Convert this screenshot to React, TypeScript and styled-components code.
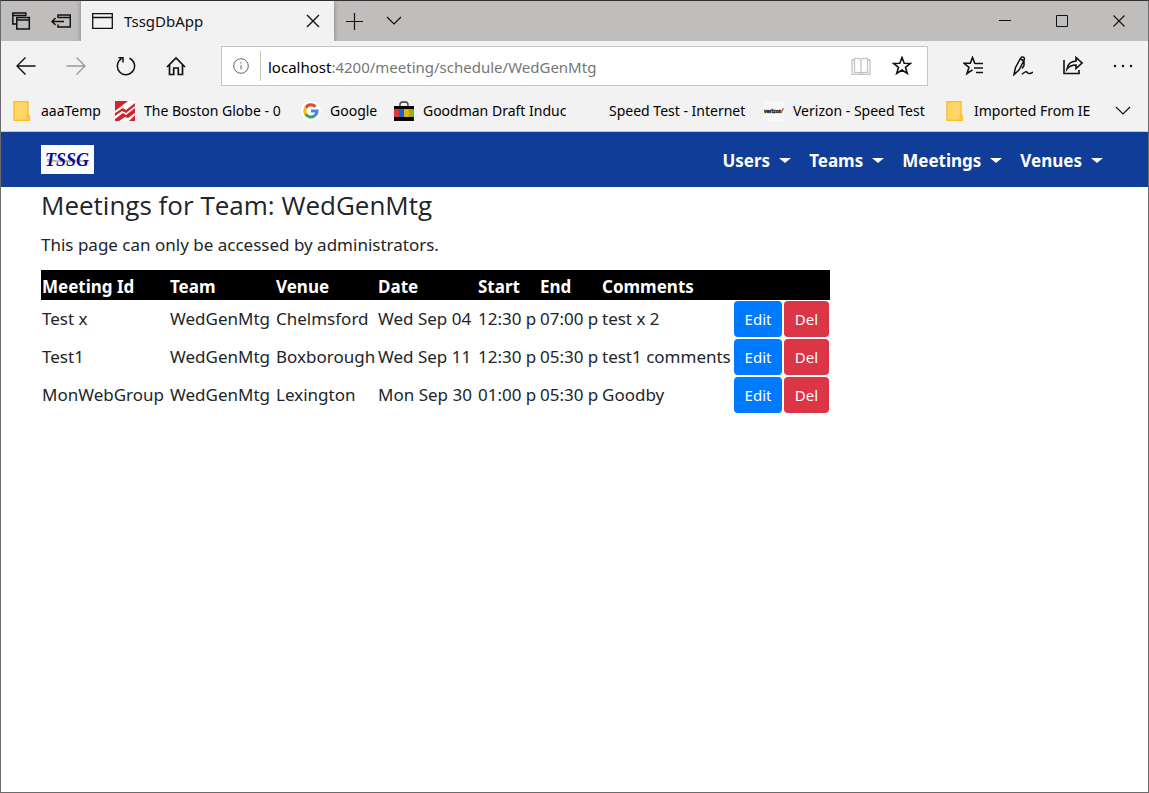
import React from "react";
import styled, { createGlobalStyle } from "styled-components";

const Global = createGlobalStyle`
  *, *::before, *::after { box-sizing: border-box; }
  body { margin: 0; background: #fff; font-family: "Noto Sans", "Open Sans", sans-serif; }
  button, input { font: inherit; color: inherit; }
`;

const Window = styled.div`
  min-height: 100vh;
  display: flex;
  flex-direction: column;
  border: 1px solid #6b6b6b;
  border-top-color: #333031;
`;

const TabStrip = styled.header`
  display: flex;
  height: 40px;
  padding-right: 1px;
  background: #bfbebc;
`;

const IconButton = styled.button<{ $w: number; $muted?: boolean }>`
  display: flex;
  align-items: center;
  justify-content: center;
  flex: none;
  width: ${(p) => p.$w}px;
  height: 40px;
  padding: 0;
  border: 0;
  background: transparent;
  color: ${(p) => (p.$muted ? "#9a9a9a" : "#111")};
`;

const Tab = styled.div`
  display: flex;
  align-items: center;
  width: 253px;
  padding-left: 11px;
  background: #f2f2f2;
  color: #111;
  box-shadow: 0 0 5px rgba(0, 0, 0, 0.35);
  clip-path: inset(0 -5px 0 -5px);
`;

const TabTitle = styled.span`
  flex: 1;
  padding-left: 11px;
  font-size: 15px;
  line-height: 20px;
`;

const Spacer = styled.div`
  flex: 1;
`;

const Toolbar = styled.div`
  display: flex;
  align-items: center;
  height: 50px;
  background: #f2f2f2;
`;

const AddressBar = styled.div`
  display: flex;
  align-items: center;
  flex: 1;
  min-width: 0;
  height: 40px;
  margin: 0 20px;
  padding-right: 5px;
  border: 1px solid #c6c6c6;
  background: #fff;
`;

const Address = styled.div`
  flex: 1;
  min-width: 0;
  padding-left: 7px;
  border-left: 1px solid #c6c6c6;
  height: 30px;
  font-size: 15px;
  line-height: 32px;
  color: #767676;
  white-space: nowrap;
  overflow: hidden;
`;

const Host = styled.span`
  color: #000;
`;

const Favorites = styled.nav`
  display: flex;
  align-items: center;
  height: 41px;
  padding: 0 7px 0 11px;
  border-bottom: 1px solid #cacaca;
  background: #f2f2f2;
`;

const Favorite = styled.a<{ $w: number }>`
  display: flex;
  align-items: center;
  flex: none;
  gap: 9px;
  width: ${(p) => p.$w}px;
  padding-right: 14px;
  font-size: 14px;
  line-height: 22px;
  color: #000;
  text-decoration: none;
  white-space: nowrap;
`;

const FavoriteLabel = styled.span`
  overflow: hidden;
`;

const Navbar = styled.nav`
  display: flex;
  align-items: center;
  justify-content: space-between;
  height: 55px;
  padding: 2px 45px 0 40px;
  background: #0f3d97;
`;

const Brand = styled.a`
  display: block;
  height: 31px;
`;

const Menu = styled.div`
  display: flex;
  gap: 18px;
`;

const MenuButton = styled.button`
  display: flex;
  align-items: center;
  gap: 9px;
  padding: 0;
  border: 0;
  background: transparent;
  color: #fff;
  font-size: 17px;
  font-weight: 700;
  line-height: 26px;

  &::after {
    content: "";
    border: 5px solid transparent;
    border-width: 5px 6px 0;
    border-top-color: #fff;
  }
`;

const Content = styled.main`
  flex: 1;
  padding: 0 40px;
  color: #212529;
  background: #fff;
`;

const Title = styled.h3`
  margin: 0 0 8px;
  font-family: "Open Sans", sans-serif;
  font-size: 26px;
  font-weight: 400;
  line-height: 36px;
`;

const Note = styled.p`
  margin: 0 0 12px;
  font-size: 17px;
  line-height: 27px;
`;

const MeetingTable = styled.table`
  table-layout: fixed;
  width: 789px;
  border-collapse: collapse;
  font-size: 17px;
  line-height: 28px;
  white-space: nowrap;
`;

const HeadCell = styled.th`
  height: 30px;
  padding: 3px 1px 0;
  line-height: 27px;
  text-align: left;
  color: #fff;
  background: #000;
`;

const Cell = styled.td`
  height: 38px;
  padding: 1px;
`;

const ActionButton = styled.button<{ $bg: string }>`
  display: block;
  width: 100%;
  height: 36px;
  padding: 0;
  border: 0;
  border-radius: 4px;
  background: ${(p) => p.$bg};
  color: #fff;
  font-size: 15px;
  line-height: 24px;
`;

type IconProps = { w?: number; h?: number; sw?: number; children: React.ReactNode };
const Icon = ({ w = 20, h = 20, sw = 1.4, children }: IconProps) => (
  <svg width={w} height={h} viewBox={`0 0 ${w} ${h}`} fill="none" stroke="currentColor" strokeWidth={sw} aria-hidden="true">
    {children}
  </svg>
);

const STAR = "M10 1.5l2.2 5.8 6.3.2-5 3.9 1.8 6.1L10 14l-5.3 3.5 1.8-6.1-5-3.9 6.3-.2z";

const Folder = () => (
  <Icon>
    <path d="M2 .7h14v13l1.300 1.500v4H2z" fill="#ffd667" stroke="#fcbf23" />
    <path d="M14.500 19v-4.500l1.500-1.500 1.500 1.500V19z" fill="#ffc42c" stroke="none" />
  </Icon>
);

const Globe = () => (
  <Icon>
    <path d="M0 0h20v20H0z" fill="#d3242b" stroke="none" />
    <path d="M13 0h7v2L11 9 8 7 0 12v-2zM0 15l7-5 4 2 9-7v2l-9 7-3-2-8 6zM4 20l6-4 3 1 7-5v2l-6 6z" fill="#fff" stroke="none" />
  </Icon>
);

const GoogleMark = () => (
  <Icon sw={3}>
    <circle cx="10" cy="10" r="10" fill="#fff" stroke="none" />
    <path d="M4.800 6.700A6 6 0 0 1 14.400 5.700" stroke="#ea4335" />
    <path d="M4.800 6.700a6 6 0 0 0 0 6.600" stroke="#fbbc05" />
    <path d="M4.800 13.300a6 6 0 0 0 8.800 1.500" stroke="#34a853" />
    <path d="M10 10h6a6 6 0 0 1-2.400 4.800" stroke="#4285f4" />
  </Icon>
);

const Bag = () => (
  <Icon>
    <path d="M6 5V3.500Q6 .8 10 .8T14 3.500V5" stroke="#555" strokeWidth="1.600" />
    <path d="M0 5h20v15H0z" fill="#000" stroke="none" />
    <path d="M0 8h5v8H0z" fill="#e0343a" stroke="none" />
    <path d="M5 8h5v8H5z" fill="#1267d8" stroke="none" />
    <path d="M10 8h5v8h-5z" fill="#f5ae02" stroke="none" />
    <path d="M15 8h5v8h-5z" fill="#86b817" stroke="none" />
  </Icon>
);

const Verizon = () => (
  <svg width="20" height="20" viewBox="0 0 20 20" aria-hidden="true">
    <path d="M0 0h20v20H0z" fill="#f7f7f7" />
    <text x="0" y="12" fontFamily="Liberation Sans" fontWeight="700" fontSize="5" fill="#222" stroke="#222" strokeWidth=".4">verizon</text>
    <path d="M18 9l1-2h1l-1.500 4z" fill="#e0343a" />
  </svg>
);

const favorites = [
  { label: "aaaTemp", w: 103, icon: <Folder /> },
  { label: "The Boston Globe - 0", w: 186, icon: <Globe /> },
  { label: "Google", w: 93, icon: <GoogleMark /> },
  { label: "Goodman Draft Induc", w: 186, icon: <Bag /> },
  { label: "Speed Test - Internet", w: 184, icon: <Icon>{null}</Icon> },
  { label: "Verizon - Speed Test", w: 181, icon: <Verizon /> },
  { label: "Imported From IE", w: 160, icon: <Folder /> },
];

const columns = [
  { label: "Meeting Id", w: 128 },
  { label: "Team", w: 106 },
  { label: "Venue", w: 102 },
  { label: "Date", w: 100 },
  { label: "Start", w: 62 },
  { label: "End", w: 62 },
  { label: "Comments", w: 132 },
  { label: "", w: 50 },
  { label: "", w: 47 },
];

const meetings = [
  ["Test x", "WedGenMtg", "Chelmsford", "Wed Sep 04", "12:30 p", "07:00 p", "test x 2"],
  ["Test1", "WedGenMtg", "Boxborough", "Wed Sep 11", "12:30 p", "05:30 p", "test1 comments"],
  ["MonWebGroup", "WedGenMtg", "Lexington", "Mon Sep 30", "01:00 p", "05:30 p", "Goodby"],
];

export default function App() {
  return (
    <Window>
      <Global />
      <TabStrip>
        <IconButton $w={40} aria-label="Tabs set aside">
          <Icon sw={1.5}>
            <path d="M5 13H1.800V2h13v3M1.800 4.500h13" />
            <path d="M5.800 6.500h12.500v11.500H5.800zM5.800 9h12.500" />
          </Icon>
        </IconButton>
        <IconButton $w={40} aria-label="Set tabs aside">
          <Icon sw={1.5}>
            <path d="M7 7V4h12.300v12H7v-2.500M7 6.500h12M0.800 10.500H13M4.500 7L1 10.500 4.500 14" />
          </Icon>
        </IconButton>
        <Tab>
          <Icon w={21} h={16} sw={1.3}>
            <path d="M.7.7h19.600v14.600H.7zM.7 4.500h19.600" />
          </Icon>
          <TabTitle>TssgDbApp</TabTitle>
          <IconButton $w={43} aria-label="Close tab">
            <Icon w={14} h={14}><path d="M1 1l12 12M13 1L1 13" /></Icon>
          </IconButton>
        </Tab>
        <IconButton $w={40} aria-label="New tab">
          <Icon w={17} h={17} sw={1.2}><path d="M8.500 0v17M0 8.500h17" /></Icon>
        </IconButton>
        <IconButton $w={40} aria-label="Tab previews">
          <Icon w={16} h={10} sw={1.2}><path d="M1 1l7 7 7-7" /></Icon>
        </IconButton>
        <Spacer />
        <IconButton $w={57} aria-label="Minimize">
          <Icon w={12} h={12} sw={1}><path d="M0 5.500h12" /></Icon>
        </IconButton>
        <IconButton $w={57} aria-label="Maximize">
          <Icon w={12} h={12} sw={1}><path d="M.5.5h11v11H.5z" /></Icon>
        </IconButton>
        <IconButton $w={57} aria-label="Close">
          <Icon w={12} h={12} sw={1.1}><path d="M.5.5l11 11M11.500.5l-11 11" /></Icon>
        </IconButton>
      </TabStrip>

      <Toolbar>
        <IconButton $w={50} aria-label="Back">
          <Icon><path d="M1 10h18.500M9.500 1.500L1 10l8.500 8.500" /></Icon>
        </IconButton>
        <IconButton $w={50} $muted aria-label="Forward">
          <Icon><path d="M.5 10H19M10.500 1.500L19 10l-8.500 8.500" /></Icon>
        </IconButton>
        <IconButton $w={50} aria-label="Refresh">
          <Icon sw={1.5}><path d="M13.500 2.200A8.600 8.600 0 1 1 5.500 2.700M2.500 1.800h4.500v4.700" /></Icon>
        </IconButton>
        <IconButton $w={50} aria-label="Home">
          <Icon sw={1.7}><path d="M1 11l9-9 9 9M3.500 9v9.500h4.200V12h4.600v6.500h4.200V9" /></Icon>
        </IconButton>
        <AddressBar>
          <IconButton $w={38} aria-label="Site information">
            <Icon w={16} h={16} sw={1}>
              <circle cx="8" cy="8" r="7.300" stroke="#666" />
              <path d="M8 7v4.500M8 4v1.500" stroke="#666" />
            </Icon>
          </IconButton>
          <Address><Host>localhost</Host>:4200/meeting/schedule/WedGenMtg</Address>
          <IconButton $w={41} aria-label="Reading view">
            <Icon sw={1.3}>
              <path d="M10 3.500Q8.500 2 3.500 2.500v14q5-.5 6.500 1 1.500-1.500 6.500-1v-14Q11.500 2 10 3.500v14M3.500 4H1v14.300h18V4h-2.500" stroke="#c4c4c4" />
            </Icon>
          </IconButton>
          <IconButton $w={41} aria-label="Add to favorites">
            <Icon sw={1.6}><path d={STAR} /></Icon>
          </IconButton>
        </AddressBar>
        <IconButton $w={50} aria-label="Hub">
          <Icon sw={1.6}>
            <path d="M12 7.300h-.3L9.500 1.500 7.300 7.300H1l5 4-2 6.200 5.500-3.700M12 7.500h8M11 12h9M13 16.500h7" />
          </Icon>
        </IconButton>
        <IconButton $w={50} aria-label="Add notes">
          <Icon sw={1.5}>
            <path d="M1 18.500L2.500 11.500 7.500 2.500q1.500-2.300 3-1.300t.4 3.300L6 14zM1 18.500L6 14M7.500 3l3.500 2v4.500L9 12.500M9 18.300q4-4 5.500-1.700t5.500-.6" />
          </Icon>
        </IconButton>
        <IconButton $w={50} aria-label="Share">
          <Icon sw={1.6}>
            <path d="M1 4v13.500h15V14M4 13q1-7.500 9-8V1.500L19 7l-6 5.500V9Q7 9 4 13z" />
          </Icon>
        </IconButton>
        <IconButton $w={50} aria-label="Settings and more">
          <Icon>
            <g fill="currentColor" stroke="none">
              <circle cx="2" cy="10" r="1.200" /><circle cx="10" cy="10" r="1.200" /><circle cx="18" cy="10" r="1.200" />
            </g>
          </Icon>
        </IconButton>
      </Toolbar>

      <Favorites aria-label="Favorites">
        {favorites.map((f) => (
          <Favorite key={f.label} href="#" $w={f.w}>
            {f.icon}
            <FavoriteLabel>{f.label}</FavoriteLabel>
          </Favorite>
        ))}
        <Spacer />
        <IconButton $w={36} aria-label="More favorites">
          <Icon w={16} h={10} sw={1.2}><path d="M1 1l7 7 7-7" /></Icon>
        </IconButton>
      </Favorites>

      <Navbar>
        <Brand href="#" aria-label="TSSG home">
          <svg width="53" height="29" viewBox="0 0 53 29" aria-hidden="true">
            <path d="M0 0h53v29H0z" fill="#fff" />
            <text x="26" y="21" textAnchor="middle" fontFamily="Liberation Serif" fontStyle="italic" fontWeight="700" fontSize="18" fill="#0a0aa0">TSSG</text>
            <text x="26" y="17" textAnchor="middle" fontFamily="Liberation Serif" fontStyle="italic" fontSize="4" fill="#222">Technical Support Group</text>
          </svg>
        </Brand>
        <Menu>
          {["Users", "Teams", "Meetings", "Venues"].map((m) => (
            <MenuButton key={m} aria-haspopup="true">{m}</MenuButton>
          ))}
        </Menu>
      </Navbar>

      <Content>
        <Title>Meetings for Team: WedGenMtg</Title>
        <Note>This page can only be accessed by administrators.</Note>
        <MeetingTable>
          <colgroup>
            {columns.map((c, i) => <col key={i} width={c.w} />)}
          </colgroup>
          <thead>
            <tr>{columns.map((c, i) => <HeadCell key={i}>{c.label}</HeadCell>)}</tr>
          </thead>
          <tbody>
            {meetings.map((row) => (
              <tr key={row[0]}>
                {row.map((v, i) => <Cell key={i}>{v}</Cell>)}
                <Cell><ActionButton $bg="#007bff">Edit</ActionButton></Cell>
                <Cell><ActionButton $bg="#dc3545">Del</ActionButton></Cell>
              </tr>
            ))}
          </tbody>
        </MeetingTable>
      </Content>
    </Window>
  );
}
